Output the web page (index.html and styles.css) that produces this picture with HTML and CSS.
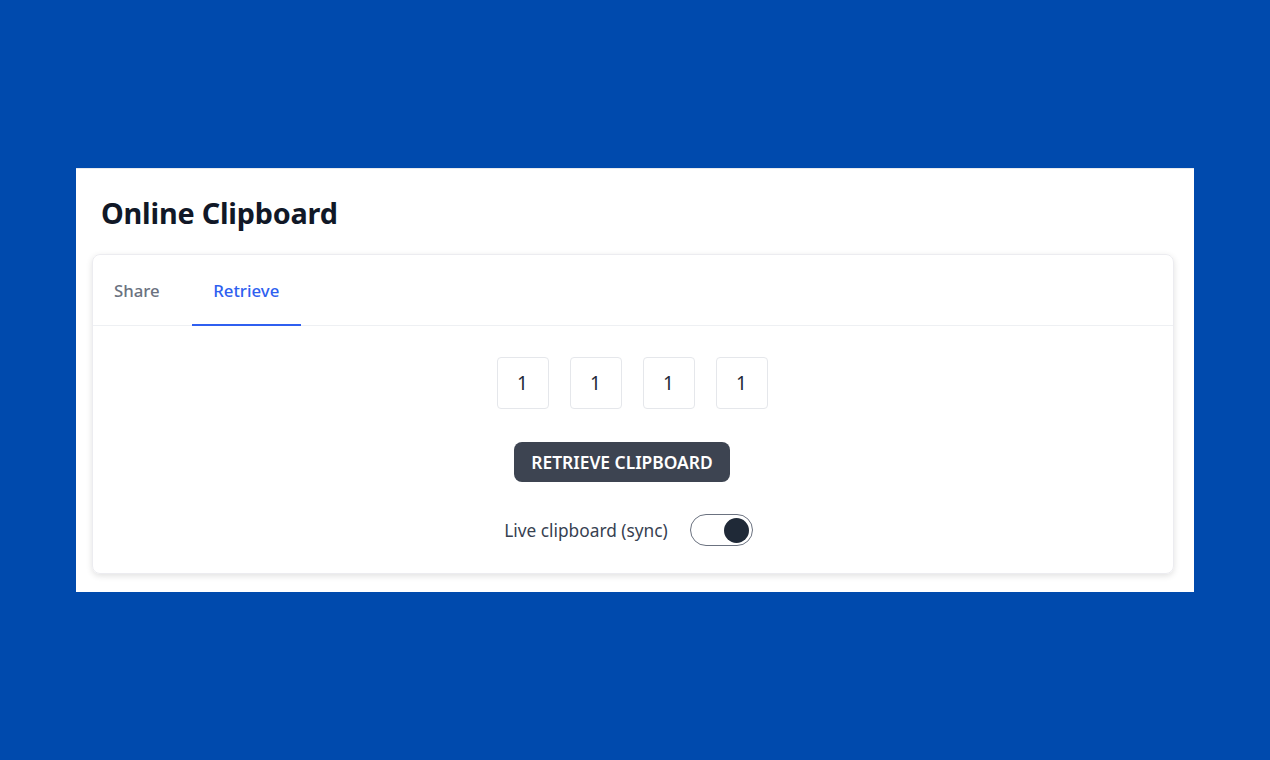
FILE: index.html
```html
<!DOCTYPE html>
<html>
<head>
<meta charset="utf-8">
<link rel="stylesheet" href="styles.css">
</head>
<body>
<div class="panel">
  <h1 class="title">Online Clipboard</h1>
  <div class="card">
    <div class="tabs">
      <div class="tab">Share</div>
      <div class="tab active">Retrieve</div>
    </div>
    <div class="content">
      <div class="codes">
        <input class="code" value="1" maxlength="1">
        <input class="code" value="1" maxlength="1">
        <input class="code" value="1" maxlength="1">
        <input class="code" value="1" maxlength="1">
      </div>
      <button class="btn">RETRIEVE CLIPBOARD</button>
      <div class="sync">
        <span class="sync-label">Live clipboard (sync)</span>
        <span class="toggle"><span class="knob"></span></span>
      </div>
    </div>
  </div>
</div>
</body>
</html>
```

FILE: styles.css
```css
html, body {
  margin: 0;
  padding: 0;
}
body {
  background: #004aad;
  font-family: "Noto Sans", "Open Sans", sans-serif;
  padding: 168px 0 0 76px;
  height: 760px;
  box-sizing: border-box;
}
.panel {
  width: 1118px;
  height: 424px;
  box-sizing: border-box;
  background: #fff;
  border-top: 1px solid #e8eaee;
  padding: 0 20px 0 16px;
}
.title {
  margin: 0;
  padding: 26px 0 0 9px;
  height: 58px;
  box-sizing: border-box;
  font-size: 28.8px;
  line-height: 36px;
  font-weight: 700;
  color: #111827;
  letter-spacing: -0.2px;
}
.card {
  margin-top: 27px;
  height: 320px;
  box-sizing: border-box;
  border: 1px solid #ececf0;
  border-radius: 8px;
  box-shadow: 0 2px 6px rgba(0,0,0,0.12);
}
.tabs {
  display: flex;
  gap: 11px;
  height: 71px;
  box-sizing: border-box;
  border-bottom: 1px solid #eef0f3;
}
.tab {
  padding: 0 21px;
  font-size: 16.8px;
  font-weight: 500;
  color: #6b7280;
  display: flex;
  align-items: center;
  height: 70px;
  box-sizing: border-box;
}
.tab.active {
  color: #2f5ff0;
  border-bottom: 2px solid #2f5ff0;
  height: 71px;
  padding-top: 2px;
  margin-bottom: -1px;
  width: 109px;
  justify-content: center;
}
.content {
  display: flex;
  flex-direction: column;
  align-items: center;
  padding-top: 31px;
}
.codes {
  display: flex;
  gap: 21px;
  margin-left: -2px;
}
.code {
  width: 52px;
  height: 52px;
  box-sizing: border-box;
  border: 1px solid #e5e7eb;
  border-radius: 4px;
  text-align: center;
  font-family: "Noto Sans", sans-serif;
  font-size: 19px;
  color: #1f2937;
  padding: 0;
  outline: none;
  background: #fff;
}
.btn {
  margin-top: 33px;
  height: 40px;
  padding: 0 17px;
  background: #3d4451;
  color: #fff;
  border: none;
  border-radius: 8px;
  font-family: "Noto Sans", sans-serif;
  font-size: 17.4px;
  font-weight: 600;
  letter-spacing: 0;
  margin-left: -22px;
}
.sync {
  margin-top: 32px;
  display: flex;
  align-items: center;
  gap: 22px;
  margin-left: -9px;
}
.sync-label {
  font-size: 17.3px;
  color: #374151;
}
.toggle {
  width: 63px;
  height: 32px;
  box-sizing: border-box;
  border: 1.5px solid #6b7280;
  border-radius: 16px;
  display: flex;
  align-items: center;
  justify-content: flex-end;
  padding-right: 3px;
  background: #fff;
}
.knob {
  width: 25px;
  height: 25px;
  border-radius: 50%;
  background: #1f2937;
}
```
